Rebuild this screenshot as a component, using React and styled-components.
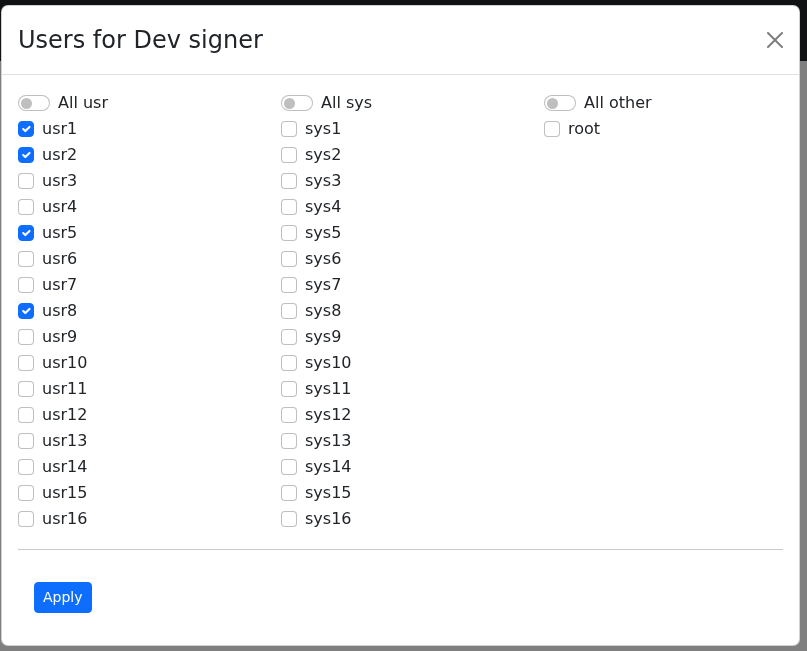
import React, { useState } from 'react';
import styled, { createGlobalStyle } from 'styled-components';

const GlobalStyle = createGlobalStyle`
  html, body {
    margin: 0;
    padding: 0;
  }
  body {
    font-family: "DejaVu Sans", sans-serif;
    color: #212529;
    background: #fff;
  }
  * {
    box-sizing: border-box;
  }
`;

const Page = styled.div`
  position: relative;
  height: 651px;
  overflow: hidden;
  background: #fff;
`;

const Navbar = styled.div`
  height: 61px;
  background: #212529;
`;

const Backdrop = styled.div`
  position: fixed;
  inset: 0;
  background: rgba(0, 0, 0, 0.5);
  display: flex;
  align-items: flex-start;
  padding: 5px 0 0 1px;
`;

const Modal = styled.div`
  width: 799px;
  background: #fff;
  border: 1px solid rgba(0, 0, 0, 0.175);
  border-radius: 7px;
`;

const Header = styled.div`
  display: flex;
  align-items: center;
  justify-content: space-between;
  padding: 16px;
  border-bottom: 1px solid #dee2e6;
`;

const Title = styled.h4`
  margin: 0;
  font-size: 24px;
  line-height: 1.5;
  font-weight: 400;
`;

const CloseButton = styled.button`
  width: 24px;
  height: 24px;
  padding: 4px;
  margin: -8px -4px -8px auto;
  border: 0;
  background: transparent;
  opacity: 0.5;
  cursor: pointer;
  display: flex;
  align-items: center;
  justify-content: center;
`;

const Body = styled.div`
  padding: 16px;
`;

const Columns = styled.div`
  display: grid;
  grid-template-columns: repeat(3, 1fr);
  column-gap: 24px;
`;

const Column = styled.div`
  display: flex;
  flex-direction: column;
`;

const FormCheck = styled.label`
  display: flex;
  align-items: flex-start;
  min-height: 24px;
  margin-bottom: 2px;
  font-size: 16px;
  line-height: 24px;
  cursor: pointer;
`;

const Box = styled.span`
  flex: none;
  width: 16px;
  height: 16px;
  margin: 4px 8px 0 0;
  border-radius: 4px;
  border: 1px solid ${p => (p.$checked ? '#0d6efd' : 'rgba(0, 0, 0, 0.25)')};
  background: ${p => (p.$checked ? '#0d6efd' : '#fff')};
  display: flex;
  align-items: center;
  justify-content: center;
`;

const Switch = styled.span`
  flex: none;
  width: 32px;
  height: 16px;
  margin: 4px 8px 0 0;
  border-radius: 16px;
  border: 1px solid rgba(0, 0, 0, 0.25);
  background: #fff;
  display: flex;
  align-items: center;
  padding-left: 2px;
`;

const Knob = styled.span`
  width: 11px;
  height: 11px;
  border-radius: 50%;
  background: #bfbfbf;
`;

const Divider = styled.hr`
  margin: 16px 0;
  border: 0;
  border-top: 1px solid #c8c9ca;
`;

const Footer = styled.div`
  padding: 16px;
`;

const Button = styled.button`
  font-family: "DejaVu Sans", sans-serif;
  font-size: 14px;
  line-height: 1.5;
  padding: 4px 8px;
  color: #fff;
  background: #0d6efd;
  border: 1px solid #0d6efd;
  border-radius: 4px;
  cursor: pointer;
`;

function Checkbox({ checked, label, onChange }) {
  return (
    <FormCheck onClick={onChange}>
      <Box $checked={checked}>
        {checked && (
          <svg width="16" height="16" viewBox="0 0 20 20">
            <path
              d="m6 10 3 3 6-6"
              fill="none"
              stroke="#fff"
              strokeWidth="3"
              strokeLinecap="round"
              strokeLinejoin="round"
            />
          </svg>
        )}
      </Box>
      {label}
    </FormCheck>
  );
}

function Toggle({ label }) {
  return (
    <FormCheck>
      <Switch>
        <Knob />
      </Switch>
      {label}
    </FormCheck>
  );
}

const range = n => Array.from({ length: n }, (_, i) => i + 1);

const groups = [
  { title: 'All usr', users: range(16).map(i => 'usr' + i) },
  { title: 'All sys', users: range(16).map(i => 'sys' + i) },
  { title: 'All other', users: ['root'] },
];

export default function App() {
  const [checked, setChecked] = useState(['usr1', 'usr2', 'usr5', 'usr8']);

  const toggle = name => {
    setChecked(list =>
      list.includes(name) ? list.filter(n => n !== name) : [...list, name]
    );
  };

  return (
    <Page>
      <GlobalStyle />
      <Navbar />
      <Backdrop>
        <Modal>
          <Header>
            <Title>Users for Dev signer</Title>
            <CloseButton aria-label="Close">
              <svg width="16" height="16" viewBox="0 0 16 16">
                <path
                  d="M.293.293a1 1 0 0 1 1.414 0L8 6.586 14.293.293a1 1 0 1 1 1.414 1.414L9.414 8l6.293 6.293a1 1 0 0 1-1.414 1.414L8 9.414l-6.293 6.293a1 1 0 0 1-1.414-1.414L6.586 8 .293 1.707a1 1 0 0 1 0-1.414z"
                  fill="#000"
                />
              </svg>
            </CloseButton>
          </Header>
          <Body>
            <Columns>
              {groups.map(group => (
                <Column key={group.title}>
                  <Toggle label={group.title} />
                  {group.users.map(user => (
                    <Checkbox
                      key={user}
                      label={user}
                      checked={checked.includes(user)}
                      onChange={() => toggle(user)}
                    />
                  ))}
                </Column>
              ))}
            </Columns>
            <Divider />
            <Footer>
              <Button>Apply</Button>
            </Footer>
          </Body>
        </Modal>
      </Backdrop>
    </Page>
  );
}
